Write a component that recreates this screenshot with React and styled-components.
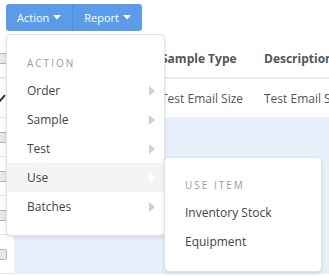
import React from 'react';
import styled, { createGlobalStyle } from 'styled-components';

const GlobalStyle = createGlobalStyle`
  html, body {
    margin: 0;
    padding: 0;
    background: #fff;
    font-family: "Open Sans", "Liberation Sans", sans-serif;
    overflow: hidden;
  }
`;

const actionMenu = ['Order', 'Sample', 'Test', 'Use', 'Batches'];
const useItems = ['Inventory Stock', 'Equipment'];

const rows = [
  { head: true, checked: false, cells: ['Sample Type', 'Description'] },
  { checked: true, cells: ['Test Email Size', 'Test Email Size'] },
  { tinted: true, cells: ['', ''] },
  { tinted: true, cells: ['', ''] },
  { tinted: true, cells: ['', ''] },
  { tinted: true, cells: ['', ''] },
];

const Caret = () => (
  <svg width="8" height="5" viewBox="0 0 8 5">
    <path d="M0 0 L8 0 L4 4.5 Z" fill="#fff" />
  </svg>
);

const Arrow = ({ light }) => (
  <svg width="6" height="10" viewBox="0 0 6 10">
    <path d="M0 0 L6 5 L0 10 Z" fill={light ? '#fff' : '#cfcfcf'} />
  </svg>
);

const Check = () => (
  <svg width="9" height="8" viewBox="0 0 9 8">
    <path d="M1 4.5 L3.2 6.6 L8 1.2" stroke="#333" strokeWidth="2" fill="none" />
  </svg>
);

const App = () => {
  return (
    <Page>
      <GlobalStyle />
      <Toolbar>
        <ButtonGroup>
          <MenuButton>
            Action <Caret />
          </MenuButton>
          <MenuButton $last>
            Report <Caret />
          </MenuButton>
        </ButtonGroup>

        <Dropdown>
          <MenuHeader>Action</MenuHeader>
          {actionMenu.map((label) => (
            <MenuItem key={label} $active={label === 'Use'}>
              <span>{label}</span>
              <Arrow light={label === 'Use'} />
              {label === 'Use' && (
                <SubMenu>
                  <MenuHeader>Use Item</MenuHeader>
                  {useItems.map((item) => (
                    <SubItem key={item}>{item}</SubItem>
                  ))}
                </SubMenu>
              )}
            </MenuItem>
          ))}
        </Dropdown>
      </Toolbar>

      <Table>
        {rows.map((row, i) => (
          <Row key={i} $head={row.head} $tinted={row.tinted}>
            <CheckCell>
              <Checkbox $checked={row.checked}>{row.checked && <Check />}</Checkbox>
            </CheckCell>
            <Cell />
            <Cell $head={row.head}>{row.cells[0]}</Cell>
            <Cell $head={row.head}>{row.cells[1]}</Cell>
          </Row>
        ))}
      </Table>
    </Page>
  );
};

const Page = styled.div`
  width: 329px;
  height: 276px;
  overflow: hidden;
  position: relative;
`;

const Toolbar = styled.div`
  position: relative;
  padding: 4px 6px 0;
  height: 36px;
  box-sizing: border-box;
  z-index: 2;
`;

const ButtonGroup = styled.div`
  display: inline-flex;
`;

const MenuButton = styled.button`
  display: flex;
  align-items: center;
  gap: 4px;
  height: 27px;
  padding: 0 11px;
  border: none;
  border-left: ${(p) => (p.$last ? '1px solid #4f8fdc' : 'none')};
  border-radius: ${(p) => (p.$last ? '0 3px 3px 0' : '3px 0 0 3px')};
  background: #5b9ce8;
  color: #fff;
  font-family: "Open Sans", "Liberation Sans", sans-serif;
  font-size: 11px;
  cursor: pointer;
`;

const Dropdown = styled.div`
  position: absolute;
  left: 6px;
  top: 34px;
  width: 159px;
  box-sizing: border-box;
  padding: 18px 0 14px;
  background: #fff;
  border: 1px solid #e2e2e2;
  border-radius: 4px;
  box-shadow: 0 2px 4px rgba(0, 0, 0, 0.1);
`;

const MenuHeader = styled.div`
  height: 20px;
  line-height: 20px;
  margin-bottom: 3px;
  padding-left: 20px;
  font-size: 10px;
  letter-spacing: 2px;
  text-transform: uppercase;
  color: #9a9a9a;
`;

const MenuItem = styled.div`
  position: relative;
  display: flex;
  align-items: center;
  justify-content: space-between;
  height: 29px;
  padding: 0 9px 0 20px;
  font-size: 12px;
  color: #444;
  background: ${(p) => (p.$active ? '#f4f4f4' : 'transparent')};
`;

const SubMenu = styled.div`
  position: absolute;
  left: 157px;
  top: -6px;
  width: 158px;
  box-sizing: border-box;
  padding: 17px 0 15px;
  background: #fff;
  border: 1px solid #e2e2e2;
  border-radius: 5px;
  box-shadow: 0 2px 4px rgba(0, 0, 0, 0.1);
`;

const SubItem = styled.div`
  height: 29px;
  line-height: 29px;
  padding-left: 20px;
  font-size: 12px;
  color: #444;
`;

const Table = styled.div`
  margin-top: 4px;
  margin-left: -7px;
  display: flex;
  flex-direction: column;
`;

const Row = styled.div`
  display: grid;
  grid-template-columns: 21px 137px 103px 1fr;
  height: 39px;
  box-sizing: border-box;
  border-bottom: ${(p) => (p.$head ? '2px solid #e9eef5' : '1px solid #eef1f5')};
  background: ${(p) =>
    p.$tinted ? 'linear-gradient(to right, #fff 21px, #e8f0fc 21px)' : '#fff'};
  border-bottom-color: ${(p) => (p.$tinted ? '#e8f0fc' : undefined)};
`;

const CheckCell = styled.div`
  display: flex;
  align-items: center;
  padding-left: 1px;
  background: #fff;
  border-bottom: 1px solid #e6e6e6;
  margin-bottom: -1px;
`;

const Checkbox = styled.div`
  width: 13px;
  height: 11px;
  box-sizing: border-box;
  border: 1px solid #b5b5b5;
  border-radius: 2px;
  background: ${(p) => (p.$checked ? '#fff' : '#e8e8e8')};
  border-color: ${(p) => (p.$checked ? 'transparent' : '#b5b5b5')};
  display: flex;
  align-items: center;
  justify-content: flex-end;
`;

const Cell = styled.div`
  display: flex;
  align-items: center;
  padding-left: 10px;
  white-space: nowrap;
  overflow: hidden;
  font-size: 12px;
  font-weight: ${(p) => (p.$head ? 700 : 400)};
  color: #555;
`;

export default App;
